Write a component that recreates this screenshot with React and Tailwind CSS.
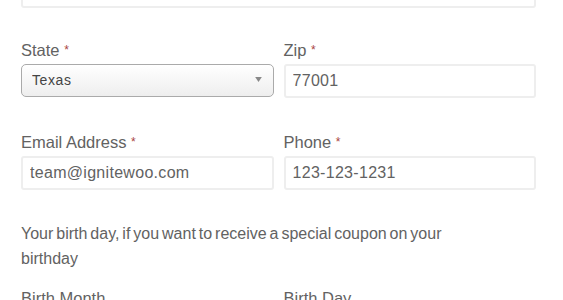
import { useState } from "react";

function Label({ children }) {
  return (
    <label className="block text-[16.5px] leading-[24px] text-[#626262] mb-[2px] mt-[2px]">
      {children} <span className="text-[#a94442] text-[12px] align-top">*</span>
    </label>
  );
}

function TextInput({ value }) {
  return (
    <input
      type="text"
      defaultValue={value}
      className="block w-full h-[34px] px-[7px] rounded-[3px] border-2 border-[#eeeeee] bg-white text-[16px] tracking-[0.3px] text-[#626262] outline-none"
    />
  );
}

export default function App() {
  const [state, setState] = useState("Texas");

  return (
    <div className="w-[563px] h-[300px] overflow-hidden bg-white font-['Liberation_Sans',Arial,sans-serif]">
      <div className="pl-[21px] pr-[27px]">
        <div className="-mt-[26px] h-[34px] rounded-[3px] border-2 border-[#eeeeee] bg-white" />

        <div className="mt-[28px] grid grid-cols-2 gap-x-[10px]">
          <div>
            <Label>State</Label>
            <div className="relative">
              <select
                value={state}
                onChange={(e) => setState(e.target.value)}
                className="block w-full h-[33px] appearance-none pl-[10px] pr-6 rounded-[5px] border border-[#aaaaaa] bg-gradient-to-b from-white to-[#eeeeee] text-[14px] tracking-[0.6px] text-[#444] outline-none"
              >
                <option>Texas</option>
                <option>California</option>
                <option>New York</option>
              </select>
              <svg
                className="pointer-events-none absolute right-[12px] top-[13px]"
                width="7"
                height="5"
                viewBox="0 0 8 6"
              >
                <path d="M0 0 L8 0 L4 6 Z" fill="#888" />
              </svg>
            </div>
          </div>
          <div>
            <Label>Zip</Label>
            <TextInput value="77001" />
          </div>
        </div>

        <div className="mt-[30px] grid grid-cols-2 gap-x-[10px]">
          <div>
            <Label>Email Address</Label>
            <TextInput value="team@ignitewoo.com" />
          </div>
          <div>
            <Label>Phone</Label>
            <TextInput value="123-123-1231" />
          </div>
        </div>

        <p className="mt-[31px] max-w-[450px] text-[16px] leading-[25px] [word-spacing:-1.5px] text-[#626262]">
          Your birth day, if you want to receive a special coupon on your birthday
        </p>

        <div className="mt-[15px] grid grid-cols-2 gap-x-[10px]">
          <div className="text-[16.5px] leading-[24px] text-[#626262]">Birth Month</div>
          <div className="text-[16.5px] leading-[24px] text-[#626262]">Birth Day</div>
        </div>
      </div>
    </div>
  );
}
